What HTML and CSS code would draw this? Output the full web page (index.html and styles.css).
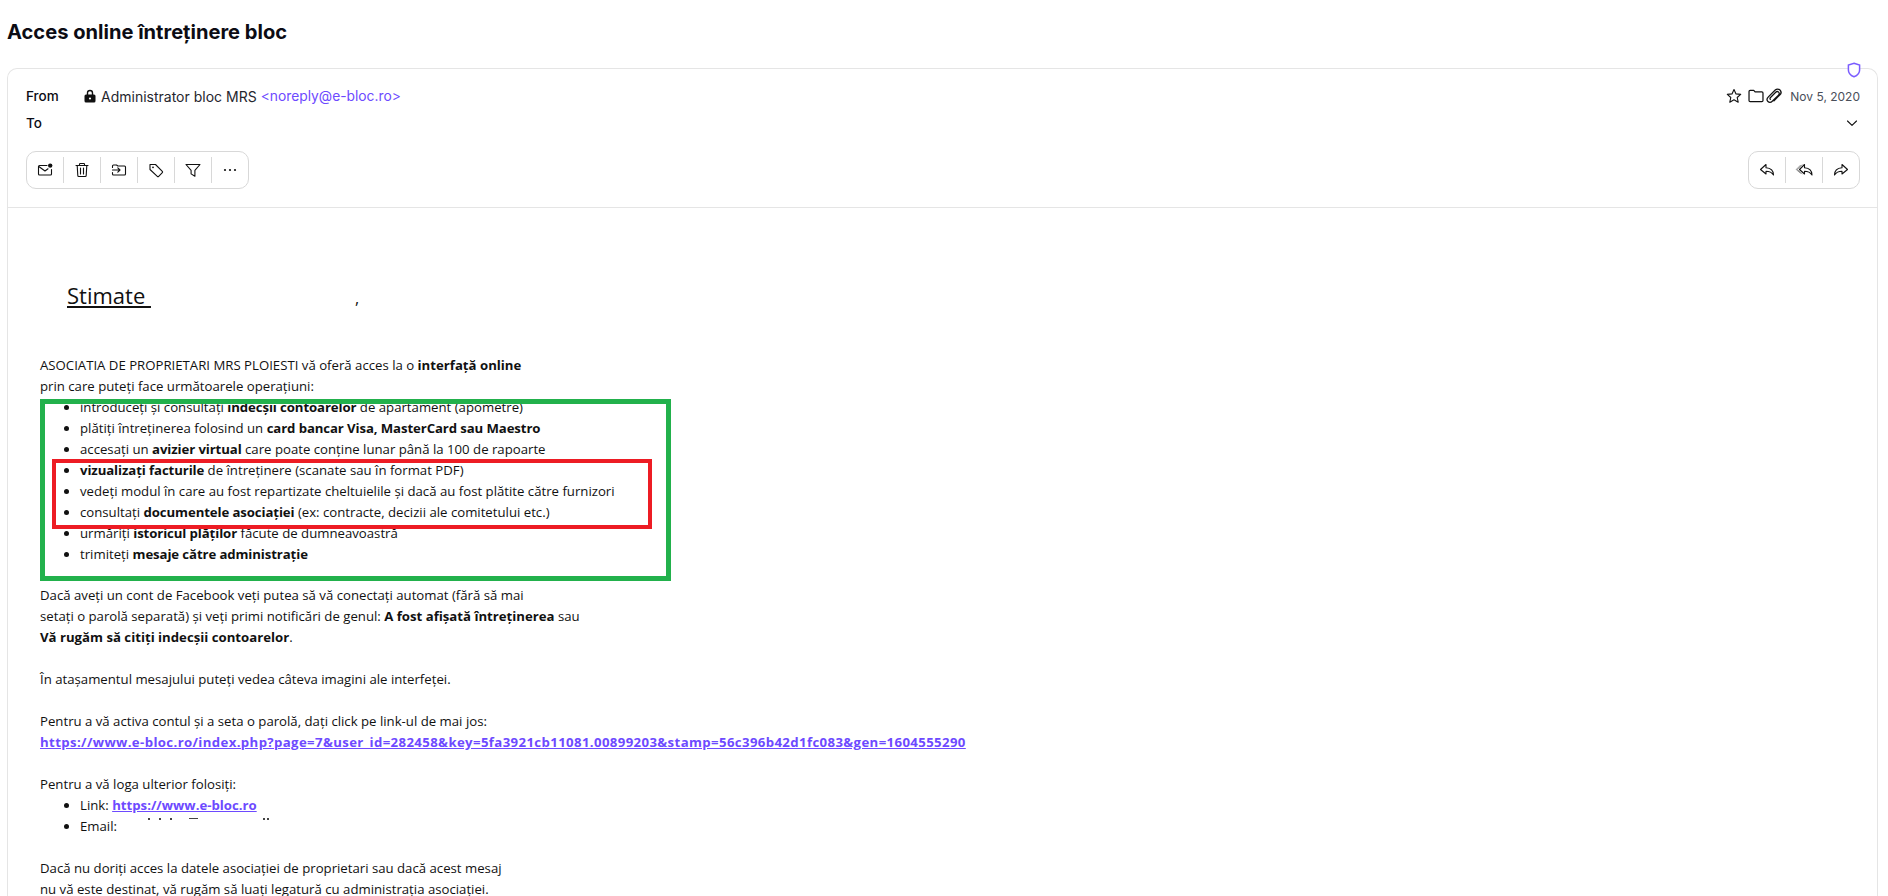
FILE: index.html
```html
<!DOCTYPE html>
<html lang="ro">
<head>
<meta charset="utf-8">
<title>Acces online întreţinere bloc</title>
<link rel="stylesheet" href="styles.css">
</head>
<body>
<h1 class="subject">Acces online întreţinere bloc</h1>
<section class="card">
  <svg class="shield" viewBox="0 0 14 16" width="14" height="16"><path d="M7 1.200 12.600 3v5c0 3.300-2.500 5.600-5.600 6.800C3.900 13.600 1.400 11.300 1.400 8V3z"/></svg>
  <header class="head">
    <div class="row row-from">
      <span class="label">From</span>
      <svg class="lock" viewBox="0 0 12 14" width="12" height="14"><path d="M3.500 6V4a2.500 2.500 0 0 1 5 0v2" fill="none" stroke="#111" stroke-width="1.400"/><rect x="0.500" y="5.500" width="11" height="8" rx="1.500" fill="#111"/><circle cx="6" cy="9.500" r="1.100" fill="#fff"/></svg>
      <span class="sender">Administrator bloc MRS</span>
      <span class="addr">&lt;noreply@e-bloc.ro&gt;</span>
      <span class="meta">
        <svg class="ic ic-star" viewBox="0 0 16 16" width="16" height="16"><path d="M8 1.500 10 5.900l4.700.5-3.500 3.100 1 4.700L8 11.800l-4.200 2.400 1-4.700-3.500-3.100 4.700-.5z"/></svg>
        <svg class="ic ic-folder" viewBox="0 0 16 16" width="18" height="18"><path d="M1.800 4c0-.6.400-1 1-1h3.200l1.200 1.300h6c.6 0 1 .4 1 1V12c0 .6-.4 1-1 1H2.800c-.6 0-1-.4-1-1z"/></svg>
        <svg class="ic ic-clip" viewBox="0 0 16 16" width="18" height="18"><path d="M13.300 2.700c-1.200-1.200-3-1.200-4.200 0L3 8.800c-1.400 1.400-1.400 3.100-.4 4.100s2.700 1 4.100-.4l5.300-5.300c.8-.8.800-1.900.1-2.600s-1.800-.7-2.600.1L4.700 9.500c-.4.400-.4 1 0 1.400M13.300 2.700c1.200 1.200 1.200 3 0 4.200L8 12.200"/></svg>
        <time class="date">Nov 5, 2020</time>
      </span>
    </div>
    <div class="row row-to">
      <span class="label">To</span>
      <svg class="ic chev" viewBox="0 0 12 12" width="12" height="12"><path d="M1.500 4 6 8.300 10.500 4"/></svg>
    </div>
    <div class="tools">
      <div class="group">
        <span class="tool"><svg class="ic" viewBox="0 0 16 16" width="16" height="16"><path d="M10 3.500H2.500c-.6 0-1 .4-1 1V12c0 .6.400 1 1 1h11c.6 0 1-.4 1-1V7.500M1.800 4.500 8 9l3-2.200"/><circle class="dot" cx="13.200" cy="3.600" r="2.200"/></svg></span>
        <span class="tool"><svg class="ic" viewBox="0 0 16 16" width="16" height="16"><path d="M2 3.500h12M5.500 3.500V2.200c0-.4.300-.7.700-.7h3.600c.4 0 .7.300.7.700v1.300M3.200 3.500l.6 10c0 .6.500 1 1 1h6.400c.5 0 1-.4 1-1l.6-10M6.500 6v6M9.500 6v6"/></svg></span>
        <span class="tool"><svg class="ic" viewBox="0 0 16 16" width="16" height="16"><path d="M1.500 5.500V4c0-.6.400-1 1-1h3l1.400 1h6.600c.6 0 1 .4 1 1V12c0 .6-.4 1-1 1h-11c-.6 0-1-.4-1-1v-1.500M1.500 8h7.500M6.800 5.800 9 8 6.800 10.200"/></svg></span>
        <span class="tool"><svg class="ic" viewBox="0 0 16 16" width="16" height="16"><path d="M2 2.500h5.500l6.800 6.800c.4.400.4 1 0 1.400l-3.600 3.600c-.4.400-1 .4-1.400 0L2 7.500z"/><circle class="dot" cx="5" cy="5.300" r=".9"/></svg></span>
        <span class="tool"><svg class="ic" viewBox="0 0 16 16" width="16" height="16"><path d="M1 2.500h14L9.900 8.300v6l-3.800-2.400V8.300z"/></svg></span>
        <span class="tool"><svg class="ic" viewBox="0 0 16 16" width="16" height="16"><circle class="dot" cx="3" cy="8" r="1.100"/><circle class="dot" cx="8" cy="8" r="1.100"/><circle class="dot" cx="13" cy="8" r="1.100"/></svg></span>
      </div>
      <div class="group">
        <span class="tool"><svg class="ic" viewBox="0 0 16 16" width="16" height="16"><path d="M7 2.500 1.500 7.500 7 12V9.300c3 0 5.500.7 7.500 3.700 0-5-3-7-7.500-7.300z"/></svg></span>
        <span class="tool"><svg class="ic" viewBox="0 0 18 16" width="18" height="16"><path d="M9.500 2.500 4.500 7.500 9.500 12V9.300c3 0 5.500.7 7.500 3.700 0-5-3-7-7.500-7.300z"/><path class="echo" d="M7 2.800 2.300 7.500 7 11.700M5.400 3.300 1.200 7.500 5.400 11.200"/></svg></span>
        <span class="tool"><svg class="ic" viewBox="0 0 16 16" width="16" height="16"><path d="M9 2.500l5.500 5L9 12V9.300c-3 0-5.500.7-7.500 3.700 0-5 3-7 7.500-7.300z"/></svg></span>
      </div>
    </div>
  </header>
  <article class="mail">
    <h2 class="greet"><span class="greet-name">Stimate&nbsp;</span><span class="comma">,</span></h2>
    <p>ASOCIATIA DE PROPRIETARI MRS PLOIESTI vă oferă acces la o <b>interfaţă online</b><br>prin care puteţi face următoarele operaţiuni:</p>
    <ul class="features">
      <li>introduceţi şi consultaţi <b>indecşii contoarelor</b> de apartament (apometre)</li>
      <li>plătiţi întreţinerea folosind un <b>card bancar Visa, MasterCard sau Maestro</b></li>
      <li>accesaţi un <b>avizier virtual</b> care poate conţine lunar până la 100 de rapoarte</li>
      <li><b>vizualizaţi facturile</b> de întreţinere (scanate sau în format PDF)</li>
      <li>vedeţi modul în care au fost repartizate cheltuielile şi dacă au fost plătite către furnizori</li>
      <li>consultaţi <b>documentele asociaţiei</b> (ex: contracte, decizii ale comitetului etc.)</li>
      <li>urmăriţi <b>istoricul plăţilor</b> făcute de dumneavoastră</li>
      <li>trimiteţi <b>mesaje către administraţie</b></li>
      <li class="blank"></li>
    </ul>
    <span class="box box-green"></span>
    <span class="box box-red"></span>
    <p class="after">Dacă aveţi un cont de Facebook veţi putea să vă conectaţi automat (fără să mai<br>setaţi o parolă separată) şi veţi primi notificări de genul: <b>A fost afişată întreţinerea</b> sau<br><b>Vă rugăm să citiţi indecşii contoarelor</b>.</p>
    <p class="gap">În ataşamentul mesajului puteţi vedea câteva imagini ale interfeţei.</p>
    <p class="gap">Pentru a vă activa contul şi a seta o parolă, daţi click pe link-ul de mai jos:<br><a class="long" href="#">https://www.e-bloc.ro/index.php?page=7&amp;user_id=282458&amp;key=5fa3921cb11081.00899203&amp;stamp=56c396b42d1fc083&amp;gen=1604555290</a></p>
    <p class="gap">Pentru a vă loga ulterior folosiţi:</p>
    <ul class="creds">
      <li>Link: <a href="#">https://www.e-bloc.ro</a></li>
      <li class="email">Email:<span class="specks"><i></i><i></i><i></i><i class="bar"></i><i></i><i></i></span></li>
    </ul>
    <p class="gap">Dacă nu doriţi acces la datele asociaţiei de proprietari sau dacă acest mesaj<br>nu vă este destinat, vă rugăm să luaţi legatură cu administraţia asociaţiei.</p>
  </article>
</section>
</body>
</html>
```
FILE: styles.css
```css
html, body { margin: 0; height: 896px; overflow: hidden; background: #fff; }
body { font-family: Inter, "Liberation Sans", sans-serif; color: #0c0c14; }
.subject { margin: 0; padding: 20px 7px 0; font-size: 20.100px; line-height: 24px; font-weight: 700; }
.card { position: relative; margin: 24px 10px 0 7px; height: 828px; border: 1px solid #e5e5e5; border-bottom: 0; border-radius: 10px 10px 0 0; box-sizing: border-box; }
.shield { position: absolute; top: -7px; right: 16px; fill: #fff; stroke: #7a5cff; stroke-width: 1.500; }
.head { height: 138px; border-bottom: 1px solid #e5e5e5; padding: 0 17px 0 18px; }
.row { display: flex; align-items: center; font-size: 14px; }
.row-from { padding-top: 17px; height: 20px; }
.row-to { margin-top: 7px; height: 20px; justify-content: space-between; }
.label { width: 58px; font-size: 13.500px; font-weight: 500; }
.lock { margin-right: 5px; }
.sender { color: #26262e; margin-right: 4px; }
.addr { color: #6d4aff; font-size: 13.800px; }
.meta { margin-left: auto; display: flex; align-items: center; }
.date { font-size: 12px; color: #4a4f5a; margin-left: 7px; }
.ic { fill: none; stroke: #111; stroke-width: 1.100; stroke-linejoin: round; stroke-linecap: round; flex: none; }
.ic .dot { fill: #111; stroke: none; }
.ic .echo { stroke: #777; stroke-width: .8; }
.ic-folder { margin-left: 5px; }
.chev { margin-right: 2px; }
.tools { display: flex; justify-content: space-between; margin-top: 18px; }
.group { display: flex; height: 38px; box-sizing: border-box; border: 1px solid #d8d8d8; border-radius: 10px; padding: 5px 0; }
.tool { width: 37px; display: flex; align-items: center; justify-content: center; border-left: 1px solid #d8d8d8; box-sizing: border-box; }
.tool:first-child { border-left: 0; width: 36px; }
.mail { position: relative; height: 689px; overflow: hidden; padding: 0 32px; box-sizing: border-box; font-family: "Open Sans", sans-serif; font-size: 13.200px; line-height: 21px; color: #111; }
.mail p { margin: 0; }
.mail .gap { margin-top: 21px; }
.mail .after { margin-top: -1px; }
.mail a { color: #6d4aff; font-weight: 700; }
.mail a.long { letter-spacing: .38px; }
.greet { margin: 0; padding: 71px 0 0 27px; height: 76px; font-size: 22px; line-height: 32px; font-weight: 400; }
.greet-name { text-decoration: underline; }
.comma { display: inline-block; margin-left: 204px; font-size: 16px; }
.features, .creds { margin: 0; padding: 0 0 0 40px; }
.features b { letter-spacing: -.1px; }
.features .blank { list-style: none; height: 21px; }
.box { position: absolute; box-sizing: border-box; border-style: solid; }
.box-green { left: 32px; top: 191px; width: 631px; height: 182px; border-width: 5px; border-color: #22b14c; }
.box-red { left: 44px; top: 251px; width: 600px; height: 70px; border-width: 4px; border-color: #ed1c24; }
.email { position: relative; }
.specks { position: absolute; left: 68px; top: 2px; display: flex; }
.specks i { width: 2px; height: 2px; margin-right: 9px; background: #444; }
.specks i:nth-child(3) { margin-right: 17px; }
.specks .bar { width: 9px; height: 1px; margin-right: 65px; }
.specks i:nth-child(6) { margin-left: -7px; }
```
